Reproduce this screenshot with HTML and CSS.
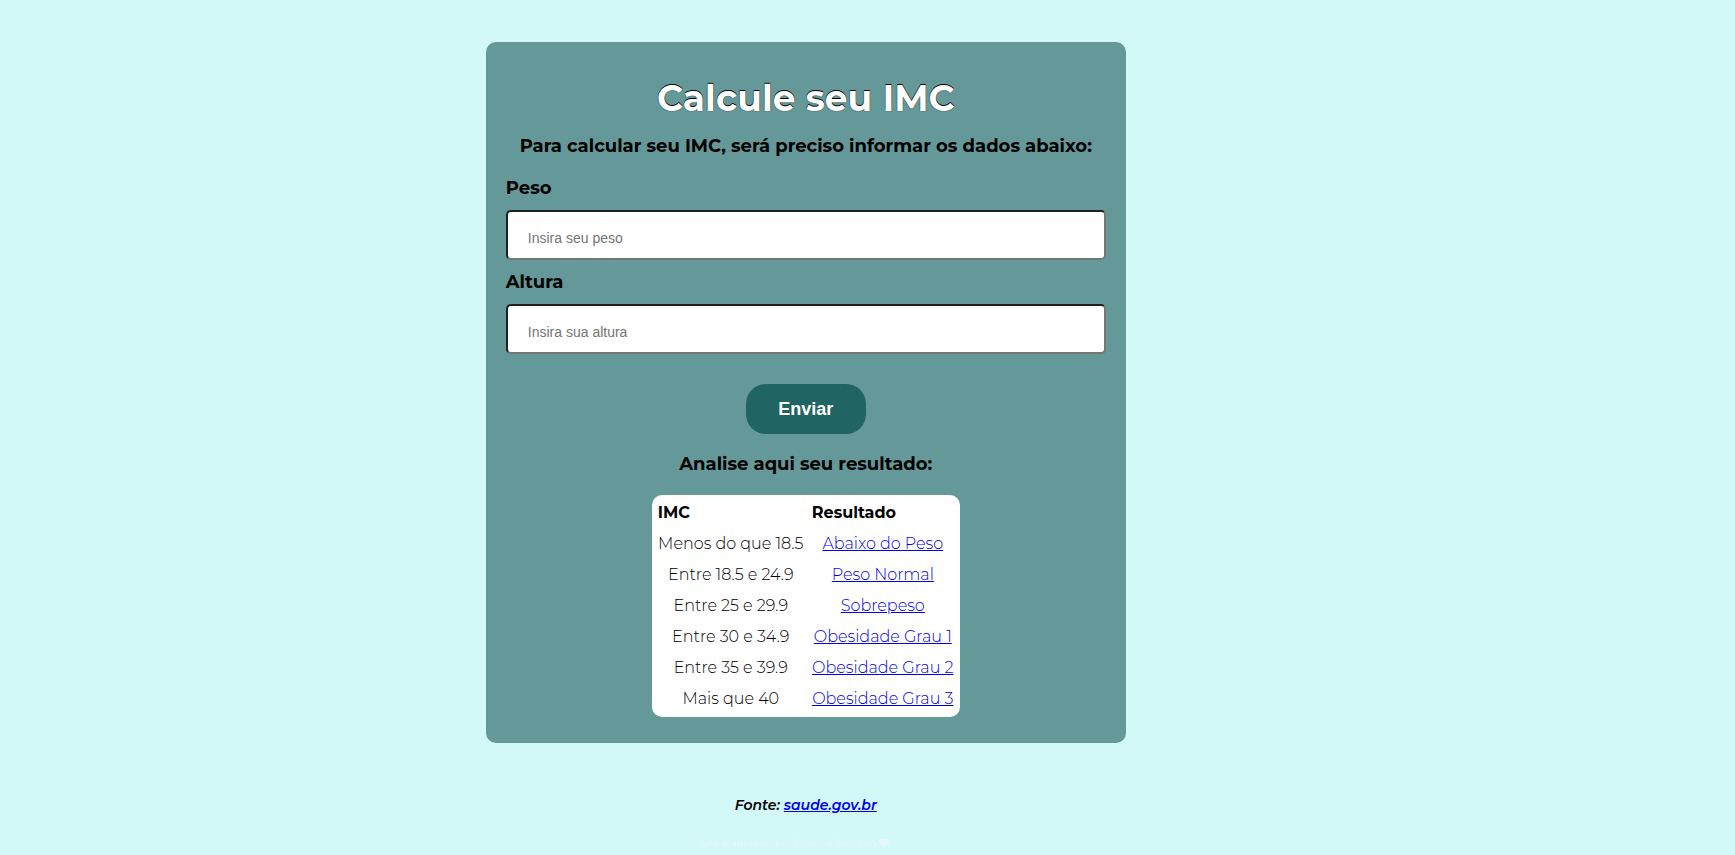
FILE: index.html
```html
<!DOCTYPE html>
<html lang="pt-BR">
<head>
<meta charset="utf-8">
<meta name="viewport" content="width=device-width, initial-scale=1">
<title>Calcule seu IMC</title>
<link rel="stylesheet" href="styles.css">
</head>
<body>
<div class="page">
  <main class="card">
    <h1 class="title">Calcule seu IMC</h1>
    <p class="lead">Para calcular seu IMC, será preciso informar os dados abaixo:</p>
    <form class="form">
      <label class="label" for="peso">Peso</label>
      <input class="field" id="peso" type="text" placeholder="Insira seu peso">
      <label class="label" for="altura">Altura</label>
      <input class="field" id="altura" type="text" placeholder="Insira sua altura">
      <button class="submit" type="button">Enviar</button>
    </form>
    <h2 class="subtitle">Analise aqui seu resultado:</h2>
    <table class="results">
      <thead>
        <tr><th scope="col">IMC</th><th scope="col">Resultado</th></tr>
      </thead>
      <tbody>
        <tr><td>Menos do que 18.5</td><td><a href="#abaixo">Abaixo do Peso</a></td></tr>
        <tr><td>Entre 18.5 e 24.9</td><td><a href="#normal">Peso Normal</a></td></tr>
        <tr><td>Entre 25 e 29.9</td><td><a href="#sobrepeso">Sobrepeso</a></td></tr>
        <tr><td>Entre 30 e 34.9</td><td><a href="#grau1">Obesidade Grau 1</a></td></tr>
        <tr><td>Entre 35 e 39.9</td><td><a href="#grau2">Obesidade Grau 2</a></td></tr>
        <tr><td>Mais que 40</td><td><a href="#grau3">Obesidade Grau 3</a></td></tr>
      </tbody>
    </table>
  </main>
  <p class="source">Fonte: <a href="#saude">saude.gov.br</a></p>
  <footer class="credit">
    <span>Site elaborado por Priscilla Trevizan</span>
    <svg class="heart" viewBox="0 0 512 512" aria-hidden="true"><path fill="currentColor" d="M462 62c-55-47-136-38-186 14l-20 20-20-20C186 24 105 15 50 62c-63 54-66 150-10 208l193 200c13 13 33 13 46 0l193-200c56-58 53-154-10-208z"/></svg>
  </footer>
</div>
</body>
</html>
```
FILE: styles.css
```css
* {
  box-sizing: border-box;
}

body {
  margin: 0;
  background: #d2f8f7;
  color: #000;
  font-family: Montserrat, Inter, sans-serif;
  font-size: 16px;
}

a {
  color: #0000ee;
}

.page {
  max-width: 640px;
  margin: 0 0 0 28%;
  padding-top: 42px;
}

.card {
  display: flex;
  flex-direction: column;
  align-items: center;
  padding: 34px 20px 26px;
  border-radius: 10px;
  background: #659898;
}

.title {
  margin: 0;
  color: #fff;
  font-size: 36px;
  font-weight: 700;
  line-height: 44px;
  text-shadow: 0 -1px 0 #000, 0 0 1px #000;
}

.lead,
.subtitle,
.label {
  margin: 0;
  font-size: 18px;
  font-weight: 700;
  line-height: 24px;
}

.lead {
  margin: 14px 0 18px;
}

.form {
  display: flex;
  flex-direction: column;
  align-self: stretch;
}

.field {
  width: 100%;
  height: 50px;
  margin: 10px 0;
  padding: 5px 20px 0;
  border: 2px inset #767676;
  border-radius: 5px;
  background: #fff;
  font-family: Arial, "Liberation Sans", sans-serif;
  font-size: 14px;
}

.field::placeholder {
  color: #757575;
}

.submit {
  align-self: center;
  width: 120px;
  height: 50px;
  margin: 20px 0 18px;
  border: 0;
  border-radius: 20px;
  background: #216464;
  color: #fff;
  font-family: Arial, "Liberation Sans", sans-serif;
  font-size: 18px;
  font-weight: 700;
}

.results {
  width: 308px;
  margin-top: 19px;
  padding: 2px 2px 3px;
  border-collapse: separate;
  border-spacing: 0;
  border-radius: 10px;
  background: #fff;
}

.results th,
.results td {
  height: 31px;
  padding: 0 4px;
  font-weight: 300;
  text-align: center;
  white-space: nowrap;
}

.results th {
  font-weight: 700;
  text-align: left;
}

.source {
  margin: 50px 0 20px;
  font-size: 14px;
  font-style: italic;
  font-weight: 600;
  line-height: 24px;
  text-align: center;
}

.credit {
  display: flex;
  align-items: center;
  justify-content: center;
  gap: 3px;
  padding-right: 22px;
  color: #eaf6ff;
  font-size: 10px;
  line-height: 12px;
}

.heart {
  width: 10px;
  height: 10px;
}
```
